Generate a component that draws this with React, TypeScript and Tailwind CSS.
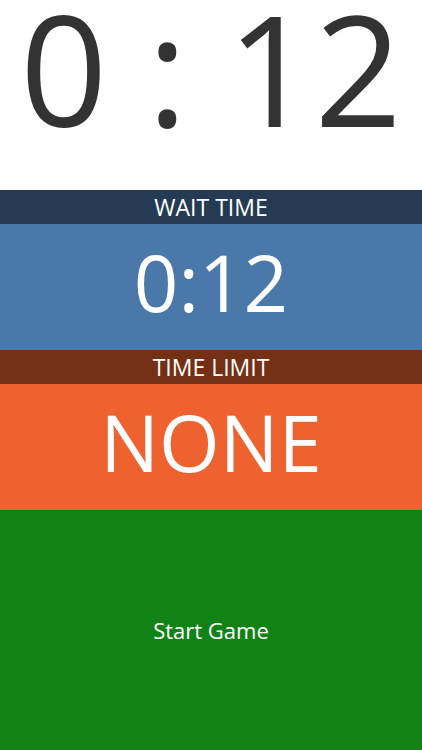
export default function App() {
  const font = { fontFamily: '"Open Sans", "Noto Sans", sans-serif' };
  return (
    <div className="flex h-[750px] w-full flex-col overflow-hidden bg-white" style={font}>
      <div className="flex h-[190px] items-start justify-center pt-[0px]">
        <span className="text-[153px] leading-[136px] text-[#333333] whitespace-pre">0 : 12</span>
      </div>
      <div className="h-[34px] bg-[#253b53] text-center text-[23px] leading-[34px] text-white">
        WAIT TIME
      </div>
      <div className="h-[126px] bg-[#4a79a9] text-center text-[78px] leading-[117px] text-white">
        0:12
      </div>
      <div className="h-[34px] bg-[#743015] text-center text-[23px] leading-[34px] text-white">
        TIME LIMIT
      </div>
      <div className="h-[126px] bg-[#ee6230] text-center text-[78px] leading-[117px] text-white">
        NONE
      </div>
      <button className="flex flex-1 items-center justify-center bg-[#118215] text-[22px] text-white">
        Start Game
      </button>
    </div>
  );
}
